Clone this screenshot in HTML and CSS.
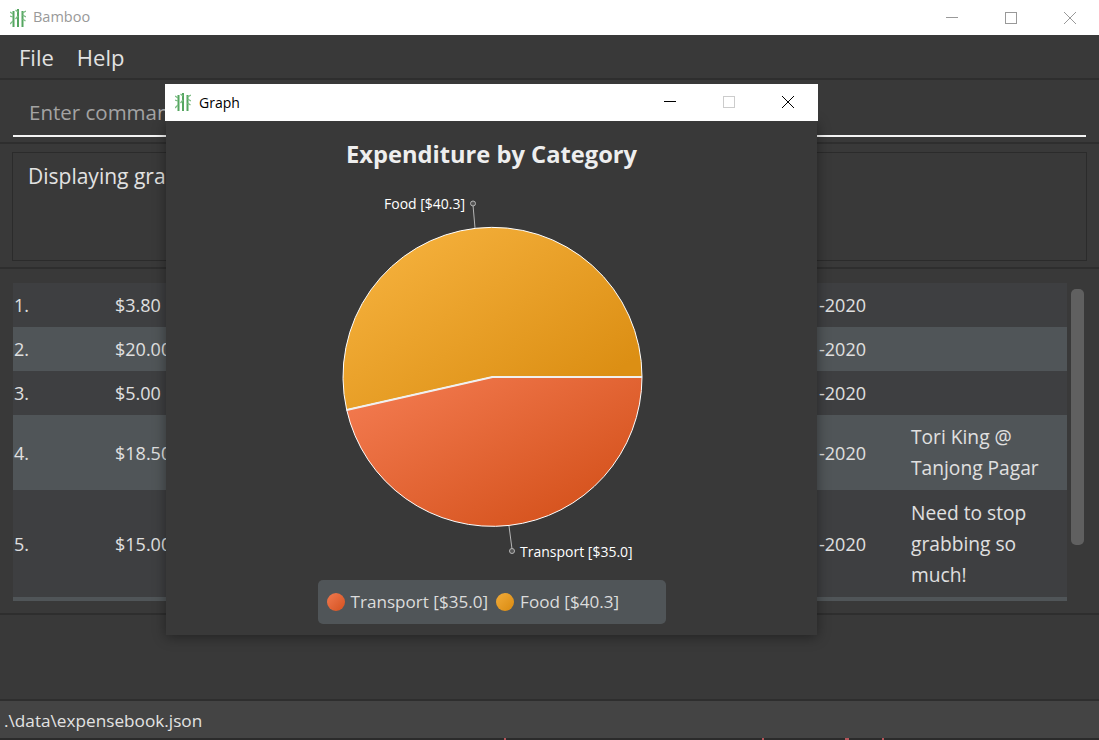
FILE: index.html
```html
<!DOCTYPE html>
<html lang="en">
<head>
    <meta charset="UTF-8">
    <meta name="viewport" content="width=device-width, initial-scale=1.0">
    <title>Bamboo</title>
    <link rel="stylesheet" href="styles.css">
</head>
<body>
    <svg class="icon-defs" width="0" height="0">
        <symbol id="bamboo" viewBox="0 0 16 18">
            <path d="M3.500 2v16M8 0v18M12.500 2v16" stroke="#55a660" stroke-width="2" fill="none"/>
            <path d="M3 5L0 3M3 8L0 7M3 12L0 15M8 3L5.500 1M8 7L5.500 10M12.500 4L16 2M12.500 6L16 8M12.500 10L15.500 12" stroke="#7cbd84" stroke-width="1.300" fill="none"/>
        </symbol>
    </svg>

    <div class="app">
        <div class="title-bar inactive">
            <svg class="app-icon"><use href="#bamboo"/></svg>
            <span class="title-text">Bamboo</span>
            <div class="win-controls">
                <span class="win-btn"><svg width="12" height="12"><path d="M0 5.500H12"/></svg></span>
                <span class="win-btn"><svg width="12" height="12"><rect x="0.500" y="0.500" width="11" height="11"/></svg></span>
                <span class="win-btn"><svg width="12" height="12"><path d="M0 0L12 12M12 0L0 12"/></svg></span>
            </div>
        </div>

        <div class="menu-bar">
            <span>File</span>
            <span>Help</span>
        </div>

        <div class="command-panel">
            <div class="command-input">Enter command</div>
        </div>

        <div class="result-panel">
            <div class="result-box">Displaying graph</div>
        </div>

        <div class="list-panel">
            <div class="expense-list">
                <div class="row"><span>1.</span><span>$3.80</span><span class="date">-2020</span><span class="note"></span></div>
                <div class="row alt"><span>2.</span><span>$20.00</span><span class="date">-2020</span><span class="note"></span></div>
                <div class="row"><span>3.</span><span>$5.00</span><span class="date">-2020</span><span class="note"></span></div>
                <div class="row alt"><span>4.</span><span>$18.50</span><span class="date">-2020</span><span class="note">Tori King @ Tanjong Pagar</span></div>
                <div class="row tall"><span>5.</span><span>$15.00</span><span class="date">-2020</span><span class="note">Need to stop grabbing so much!</span></div>
                <div class="row alt"></div>
            </div>
            <div class="scroll-track"><div class="scroll-thumb"></div></div>
        </div>

        <div class="empty-panel"></div>
        <div class="status-bar">.\data\expensebook.json</div>
        <div class="bottom-strip"></div>
    </div>

    <!-- Graph dialog floats over the main window -->
    <div class="dialog">
        <div class="title-bar dialog-title">
            <svg class="app-icon"><use href="#bamboo"/></svg>
            <span class="title-text">Graph</span>
            <div class="win-controls">
                <span class="win-btn"><svg width="12" height="12"><path d="M0 5.500H12"/></svg></span>
                <span class="win-btn disabled"><svg width="12" height="12"><rect x="0.500" y="0.500" width="11" height="11"/></svg></span>
                <span class="win-btn"><svg width="12" height="12"><path d="M0 0L12 12M12 0L0 12"/></svg></span>
            </div>
        </div>
        <div class="dialog-body">
            <h2 class="chart-title">Expenditure by Category</h2>
            <svg class="pie" width="651" height="395" viewBox="1 0 651 395">
                <defs>
                    <linearGradient id="foodFill" x1="0.1" y1="0.05" x2="0.9" y2="0.8">
                        <stop offset="0" stop-color="#f6b23e"/>
                        <stop offset="1" stop-color="#dc8f14"/>
                    </linearGradient>
                    <linearGradient id="transportFill" x1="0.05" y1="0" x2="0.85" y2="0.75">
                        <stop offset="0" stop-color="#f47c52"/>
                        <stop offset="1" stop-color="#d75520"/>
                    </linearGradient>
                </defs>
                <path class="slice" fill="url(#foodFill)" d="M327.500 202L477 202A149.500 149.500 0 1 0 181.700 234.900Z"/>
                <path class="slice" fill="url(#transportFill)" d="M327.500 202L181.700 234.900A149.500 149.500 0 0 0 477 202Z"/>
                <path class="slice-edge" d="M181.700 234.900L327.500 202L477 202"/>
                <path class="leader" d="M310 53L308 30M344 351L347 374"/>
                <circle class="leader-dot" cx="308" cy="28.500" r="2.500"/>
                <circle class="leader-dot" cx="347" cy="376" r="2.500"/>
                <text class="pie-label" x="219" y="34">Food [$40.3]</text>
                <text class="pie-label" x="355" y="382">Transport [$35.0]</text>
            </svg>
            <div class="legend">
                <span class="swatch swatch-transport"></span><span>Transport [$35.0]</span>
                <span class="swatch swatch-food"></span><span>Food [$40.3]</span>
            </div>
        </div>
    </div>
</body>
</html>
```

FILE: styles.css
```css
/* General */
* {
    box-sizing: border-box;
}

body {
    margin: 0;
    width: 1099px;
    height: 740px;
    overflow: hidden;
    font-family: "Open Sans", "Noto Sans", sans-serif;
    background-color: #393939;
    color: #e2e2e2;
}

.icon-defs {
    position: absolute;
}

.app {
    display: flex;
    flex-direction: column;
    height: 740px;
}

/* Window title bars */
.title-bar {
    display: flex;
    align-items: center;
    height: 35px;
    padding-left: 10px;
    background-color: #ffffff;
    flex-shrink: 0;
}

.app-icon {
    width: 16px;
    height: 18px;
    margin-right: 7px;
}

.title-text {
    font-size: 14px;
    color: #000000;
}

.inactive .title-text {
    font-size: 14.500px;
    color: #999999;
    margin-bottom: 2px;
}

.win-controls {
    display: flex;
    margin-left: auto;
}

.win-btn {
    display: flex;
    justify-content: center;
    align-items: center;
    width: 59px;
}

.win-btn svg {
    fill: none;
    stroke: #000000;
    stroke-width: 1;
}

.inactive .win-btn svg {
    stroke: #999999;
}

.win-btn.disabled svg {
    stroke: #cccccc;
}

/* Main window panels */
.menu-bar {
    display: flex;
    gap: 23px;
    height: 45px;
    padding: 7px 0 0 19px;
    font-size: 22px;
    border-bottom: 2px solid #2e2e2e;
    flex-shrink: 0;
}

.command-panel {
    height: 64px;
    padding: 0 13px;
    border-bottom: 2px solid #2e2e2e;
    flex-shrink: 0;
}

.command-input {
    height: 57px;
    padding: 18px 0 0 16px;
    font-size: 20.500px;
    color: #a3a3a3;
    border-bottom: 2px solid #f4f4f4;
}

.result-panel {
    height: 125px;
    padding: 8px 12px 6px;
    border-bottom: 2px solid #2e2e2e;
    flex-shrink: 0;
}

.result-box {
    height: 109px;
    padding: 9px 15px;
    font-size: 21px;
    border: 1px solid #2b2b2b;
}

.list-panel {
    display: flex;
    height: 346px;
    padding: 14px 0 12px 13px;
    border-bottom: 2px solid #2e2e2e;
    flex-shrink: 0;
}

.expense-list {
    width: 1054px;
    overflow: hidden;
    background-color: #3e3f41;
}

.row {
    display: grid;
    grid-template-columns: 101px 600px 151px 1fr;
    align-items: center;
    min-height: 44px;
    padding: 7px 0 6px 1px;
    font-size: 18px;
    line-height: 31px;
    color: #e0e0e0;
}

.row.alt {
    background-color: #505558;
}

.row.tall {
    padding: 8px 0 6px 1px;
}

.date {
    text-align: right;
}

.note {
    margin: -1px 0 1px;
    padding-left: 45px;
    font-size: 19.200px;
}

.scroll-track {
    width: 13px;
    margin: 6px 0 0 4px;
}

.scroll-thumb {
    height: 256px;
    border-radius: 5px;
    background-color: #606060;
}

.empty-panel {
    flex: 1;
    border-bottom: 2px solid #2e2e2e;
}

.status-bar {
    height: 37px;
    padding: 8px 0 0 4px;
    font-size: 17.200px;
    background-color: #444444;
    flex-shrink: 0;
}

/* thin strip under the status bar, with the red ticks of whatever is behind the window */
.bottom-strip {
    height: 2px;
    background-color: #2b2b2b;
    background-image:
        linear-gradient(#b5555a, #b5555a),
        linear-gradient(#b5555a, #b5555a),
        linear-gradient(#b5555a, #b5555a),
        linear-gradient(#b5555a, #b5555a);
    background-size: 2px 2px, 2px 2px, 4px 2px, 2px 2px;
    background-position: 504px 0, 762px 0, 845px 0, 882px 0;
    background-repeat: no-repeat;
    flex-shrink: 0;
}

/* Graph dialog */
.dialog {
    position: absolute;
    left: 165px;
    top: 84px;
    width: 653px;
    height: 551px;
}

.dialog-title {
    position: relative;
    z-index: 1;
    height: 37px;
    padding-left: 10px;
    padding-bottom: 1px;
}

.dialog-title .app-icon {
    margin-right: 8px;
}

.dialog-title .win-controls {
    margin-right: 1px;
}

.dialog-body {
    display: flex;
    flex-direction: column;
    align-items: center;
    height: 514px;
    margin: 0 1px;
    background-color: #393939;
    box-shadow: 0 2px 12px rgba(0, 0, 0, 0.4);
}

.chart-title {
    height: 54px;
    margin: 0;
    padding-top: 16px;
    font-size: 23.700px;
    line-height: 34px;
    font-weight: 700;
    color: #eeeeee;
}

.pie {
    display: block;
}

.slice {
    stroke: #ffffff;
    stroke-width: 1;
}

.slice-edge {
    fill: none;
    stroke: #f0f0f0;
    stroke-width: 2;
}

.leader {
    fill: none;
    stroke: #b5b5b5;
    stroke-width: 1;
}

.leader-dot {
    fill: #555555;
    stroke: #b5b5b5;
    stroke-width: 1;
}

.pie-label {
    font-size: 14px;
    fill: #ffffff;
}

.legend {
    display: flex;
    align-items: center;
    gap: 6px;
    width: 348px;
    height: 44px;
    margin-top: 10px;
    padding: 0 0 2px 9px;
    font-size: 17.100px;
    color: #dcdcdc;
    border-radius: 5px;
    background-color: #505558;
}

.swatch {
    width: 18px;
    height: 18px;
    margin-top: 2px;
    border-radius: 50%;
}

.swatch-transport {
    background: linear-gradient(135deg, #f07a50, #d4511f);
}

.swatch-food {
    margin-left: 2px;
    background: linear-gradient(135deg, #f2ac3a, #d98a10);
}
```
